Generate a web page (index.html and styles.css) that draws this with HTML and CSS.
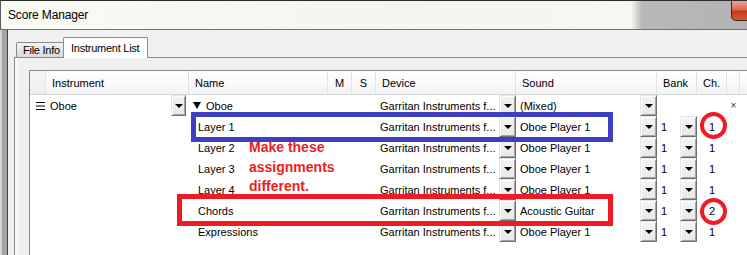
FILE: index.html
```html
<!DOCTYPE html>
<html>
<head>
<meta charset="utf-8">
<title>Score Manager</title>
<link rel="stylesheet" href="styles.css">
</head>
<body>
<div class="window">
  <header class="titlebar">
    <span class="title">Score Manager</span>
    <span class="close"></span>
  </header>
  <div class="frame">
    <div class="side"></div>
    <main class="client">
      <div class="tabs">
        <div class="tab">File Info</div>
        <div class="tab active">Instrument List</div>
      </div>
      <section class="panel">
        <div class="grid">
          <div class="row head">
            <div class="h h0"></div>
            <div class="h">Instrument</div>
            <div class="h">Name</div>
            <div class="h hc">M</div>
            <div class="h hc">S</div>
            <div class="h">Device</div>
            <div class="h">Sound</div>
            <div class="h">Bank</div>
            <div class="h">Ch.</div>
            <div class="h"></div>
            <div class="h hl"></div>
          </div>

          <div class="row">
            <div class="c c0"><svg class="menu" width="9" height="8" viewBox="0 0 9 8"><path d="M0 0.5H9M0 4H9M0 7.5H9" stroke="#000" stroke-width="1"/></svg></div>
            <div class="c"><span class="t">Oboe</span><span class="btn small"></span></div>
            <div class="c"><svg class="tri" width="8" height="7" viewBox="0 0 8 7"><path d="M0 0H8L4 7Z" fill="#000"/></svg><span class="t">Oboe</span></div>
            <div class="c"></div>
            <div class="c"></div>
            <div class="c"><span class="t">Garritan Instruments f...</span><span class="btn"></span></div>
            <div class="c"><span class="t">(Mixed)</span><span class="btn"></span></div>
            <div class="c"></div>
            <div class="c"></div>
            <div class="c cx">×</div>
            <div class="c"></div>
          </div>

          <div class="row">
            <div class="c c0"></div>
            <div class="c"></div>
            <div class="c sub"><span class="t">Layer 1</span></div>
            <div class="c"></div>
            <div class="c"></div>
            <div class="c"><span class="t">Garritan Instruments f...</span><span class="btn"></span></div>
            <div class="c"><span class="t">Oboe Player 1</span><span class="btn"></span></div>
            <div class="c"><span class="t">1</span><span class="btn"></span></div>
            <div class="c cc">1</div>
            <div class="c"></div>
            <div class="c"></div>
          </div>

          <div class="row">
            <div class="c c0"></div>
            <div class="c"></div>
            <div class="c sub"><span class="t">Layer 2</span></div>
            <div class="c"></div>
            <div class="c"></div>
            <div class="c"><span class="t">Garritan Instruments f...</span><span class="btn"></span></div>
            <div class="c"><span class="t">Oboe Player 1</span><span class="btn"></span></div>
            <div class="c"><span class="t">1</span><span class="btn"></span></div>
            <div class="c cc">1</div>
            <div class="c"></div>
            <div class="c"></div>
          </div>

          <div class="row">
            <div class="c c0"></div>
            <div class="c"></div>
            <div class="c sub"><span class="t">Layer 3</span></div>
            <div class="c"></div>
            <div class="c"></div>
            <div class="c"><span class="t">Garritan Instruments f...</span><span class="btn"></span></div>
            <div class="c"><span class="t">Oboe Player 1</span><span class="btn"></span></div>
            <div class="c"><span class="t">1</span><span class="btn"></span></div>
            <div class="c cc">1</div>
            <div class="c"></div>
            <div class="c"></div>
          </div>

          <div class="row">
            <div class="c c0"></div>
            <div class="c"></div>
            <div class="c sub"><span class="t">Layer 4</span></div>
            <div class="c"></div>
            <div class="c"></div>
            <div class="c"><span class="t">Garritan Instruments f...</span><span class="btn"></span></div>
            <div class="c"><span class="t">Oboe Player 1</span><span class="btn"></span></div>
            <div class="c"><span class="t">1</span><span class="btn"></span></div>
            <div class="c cc">1</div>
            <div class="c"></div>
            <div class="c"></div>
          </div>

          <div class="row">
            <div class="c c0"></div>
            <div class="c"></div>
            <div class="c sub"><span class="t">Chords</span></div>
            <div class="c"></div>
            <div class="c"></div>
            <div class="c"><span class="t">Garritan Instruments f...</span><span class="btn"></span></div>
            <div class="c"><span class="t">Acoustic Guitar</span><span class="btn"></span></div>
            <div class="c"><span class="t">1</span><span class="btn"></span></div>
            <div class="c cc">2</div>
            <div class="c"></div>
            <div class="c"></div>
          </div>

          <div class="row">
            <div class="c c0"></div>
            <div class="c"></div>
            <div class="c sub"><span class="t">Expressions</span></div>
            <div class="c"></div>
            <div class="c"></div>
            <div class="c"><span class="t">Garritan Instruments f...</span><span class="btn"></span></div>
            <div class="c"><span class="t">Oboe Player 1</span><span class="btn"></span></div>
            <div class="c"><span class="t">1</span><span class="btn"></span></div>
            <div class="c cc">1</div>
            <div class="c"></div>
            <div class="c"></div>
          </div>
        </div>
      </section>
    </main>
  </div>

  <div class="mark box-blue"></div>
  <div class="mark box-red"></div>
  <div class="mark ring ring-1"></div>
  <div class="mark ring ring-2"></div>
  <div class="mark note">Make these<br>assignments<br>different.</div>
</div>
</body>
</html>
```

FILE: styles.css
```css
* { box-sizing: border-box; }

html, body {
  margin: 0;
  padding: 0;
  background: #f0f0f0;
}

.window {
  position: relative;
  width: 747px;
  height: 255px;
  overflow: hidden;
  font-family: "Liberation Sans", Arial, sans-serif;
  color: #000;
}

/* ---------- title bar ---------- */
.titlebar {
  position: relative;
  height: 30px;
  border-top: 1px solid #2c2c2c;
  border-left: 1px solid #5a5a5a;
  border-bottom: 1px solid #717171;
  background: linear-gradient(to right, #fafaf4 0, #f5f5ef 400px, #f7f7f1 630px, #b8b8b8 641px, #b3b3b3 100%);
  display: flex;
  align-items: center;
  padding-left: 7px;
}

.title {
  font-size: 12px;
  letter-spacing: -0.15px;
  color: #000;
  margin-top: -1px;
}

.close {
  position: absolute;
  left: 730px;
  top: 0;
  width: 30px;
  height: 20px;
  border: 1px solid #4b2418;
  border-top: none;
  border-radius: 0 0 0 5px;
  background: linear-gradient(#e9a596 0, #d86a52 45%, #c33b1f 55%, #d45a36 100%);
}

/* ---------- frame ---------- */
.frame {
  display: flex;
  height: 225px;
}

.side {
  width: 8px;
  flex: none;
  background: linear-gradient(to right, #d4d4d4 0 2px, #a3a3a3 2px 7px, #3e3e3e 7px 8px);
}

.client {
  flex: 1;
  overflow: hidden;
  background: #f0f0f0;
  padding: 7px 0 0 6px;
}

/* ---------- tabs ---------- */
.tabs {
  display: flex;
  align-items: flex-end;
  height: 20px;
  padding-left: 2px;
  position: relative;
  z-index: 2;
}

.tab {
  font-size: 11px;
  letter-spacing: -0.25px;
  border: 1px solid #898c95;
  border-bottom: none;
  border-radius: 2px 2px 0 0;
}

.tab:first-child {
  width: 48px;
  height: 15px;
  padding: 1px 0 0 6px;
  margin-right: -1px;
  background: linear-gradient(#f2f2f2, #e6e6e6 50%, #d9d9d9);
}

.tab.active {
  width: 85px;
  height: 21px;
  margin-bottom: -1px;
  padding: 4px 0 0 7px;
  background: #fff;
}

.panel {
  width: 900px;
  height: 200px;
  border-top: 1px solid #898c95;
  border-left: 1px solid #898c95;
  box-shadow: inset 3px 0 0 #f9f9f9;
  padding: 12px 0 0 14px;
  position: relative;
  z-index: 1;
}

/* ---------- grid ---------- */
.grid {
  width: 760px;
  height: 200px;
  background: #fff;
  border-top: 1px solid #82878f;
  border-left: 1px solid #82878f;
  font-size: 11px;
}

.row {
  display: grid;
  grid-template-columns: 16px 143px 139px 24px 24px 140px 141px 40px 30px 13px 1fr;
  height: 21px;
}

.row.head {
  height: 24px;
  border-bottom: 1px solid #d5d5d5;
  background: linear-gradient(#ffffff 0, #fbfbfb 35%, #f2f3f4 100%);
}

.h {
  border-right: 1px solid #e2e3e5;
  padding: 6px 0 0 6px;
  white-space: nowrap;
  color: #000;
}

.h0 {
  background: linear-gradient(#f6f6f6, #eeeeee);
}

.hc {
  padding-left: 0;
  text-align: center;
}

.hl { border-right: none; }

.c {
  display: flex;
  align-items: center;
  padding-left: 4px;
  white-space: nowrap;
  min-width: 0;
}

.c0 {
  padding-left: 6px;
}

.sub { padding-left: 9px; }

.t {
  flex: 1;
  overflow: hidden;
  padding-top: 1px;
}

.tri {
  margin: 0 5px 0 0;
  flex: none;
}

.menu { flex: none; }

.cc {
  padding-left: 0;
  justify-content: center;
}

.cx {
  padding-left: 0;
  justify-content: center;
  font-size: 10px;
  color: #2b3b55;
}

/* dropdown buttons */
.btn {
  position: relative;
  flex: none;
  width: 17px;
  height: 21px;
  background: linear-gradient(#f4f4f4, #e8e8e8);
  border-top: 1px solid #e6e6e6;
  border-left: 1px solid #e6e6e6;
  border-right: 1px solid #6f6f6f;
  border-bottom: 1px solid #6f6f6f;
  box-shadow: inset 1px 1px 0 #fff, inset -1px -1px 0 #a3a3a3;
}

.btn.small {
  width: 15px;
  margin-right: 3px;
}

.btn::after {
  content: "";
  position: absolute;
  left: 50%;
  top: 50%;
  margin: -2px 0 0 -4px;
  border-left: 4px solid transparent;
  border-right: 4px solid transparent;
  border-top: 4px solid #000;
}

/* ---------- annotations ---------- */
.mark {
  position: absolute;
  z-index: 5;
}

.box-blue {
  left: 191px;
  top: 112px;
  width: 422px;
  height: 30px;
  border: 5px solid #3e3fbf;
}

.box-red {
  left: 177px;
  top: 194px;
  width: 436px;
  height: 32px;
  border: 5px solid #ed1c24;
}

.ring {
  width: 27px;
  height: 27px;
  border: 4px solid #ed1c24;
  border-radius: 50%;
}

.ring-1 { left: 700px; top: 112px; }
.ring-2 { left: 700px; top: 198px; }

.note {
  left: 249px;
  top: 138px;
  font-weight: bold;
  font-size: 14px;
  line-height: 19.5px;
  color: #ed1c24;
}
```
